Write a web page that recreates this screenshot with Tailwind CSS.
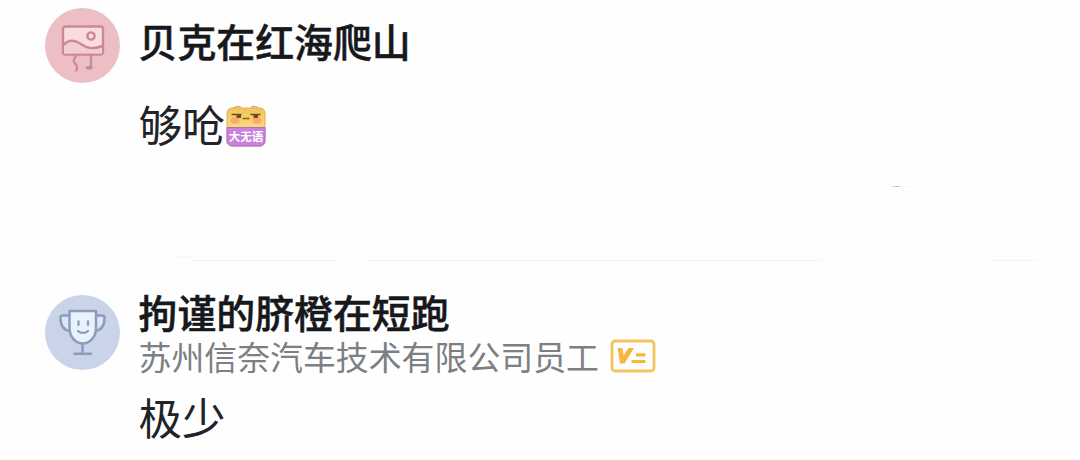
<!DOCTYPE html>
<html lang="zh-CN">
<head>
  <meta charset="UTF-8">
  <meta name="viewport" content="width=device-width, initial-scale=1.0">
  <title>评论</title>
  <!-- Tailwind CSS -->
  <script src="https://cdn.jsdelivr.net/npm/@tailwindcss/browser@4"></script>
</head>
<body class="bg-[#fefefe] h-[460px] overflow-hidden font-['Noto_Sans_CJK_SC',sans-serif]">

  <!-- First comment -->
  <article class="flex h-[255px] pl-[45px] pt-2">
    <svg class="size-[75px] shrink-0" viewBox="0 0 75 75" fill="none" stroke="#cd8993" stroke-width="2.4" stroke-linecap="round" stroke-linejoin="round">
      <circle cx="37.5" cy="37.5" r="37.5" fill="#edbfc5" stroke="none" />
      <rect x="18" y="18.500" width="40" height="28" rx="2.500" fill="#f9dce0" />
      <path d="M19 37c5-5.500 11-5 16-1.500 9 6 14 5.500 22 2.500v7.500H19z" fill="#f3cdd3" stroke="none" />
      <path d="M18.500 37c5-5.500 11-5 16.500-1.500 9 6 14 5.500 22.500 2.500" />
      <circle cx="46" cy="28" r="3.600" />
      <path d="M31 48c-2 3-3.500 5-1 7.500 2.500 2 3 4 1 7M46 48v11.500" stroke-width="2.300" />
      <path d="M42.500 59.700h3.500" stroke-width="3.400" />
    </svg>
    <div class="ml-[18.500px] pt-2 flex flex-col">
      <h2 class="text-[38.900px] leading-[48px] font-medium text-[#17181c] [-webkit-text-stroke:0.5px_#17181c]">贝克在红海爬山</h2>
      <div class="mt-[34px] flex items-center">
        <p class="text-[43.500px] leading-[52px] text-[#222326]">够呛</p>
        <svg class="mt-1 w-10 h-[42px]" viewBox="0 0 40 42">
          <defs>
            <linearGradient id="face" x1="0" y1="0" x2="0" y2="1">
              <stop offset="0" stop-color="#f3c35a" />
              <stop offset=".5" stop-color="#fbd975" />
            </linearGradient>
          </defs>
          <path d="M8 3c1-1.500 5-2 7-.500M25 2.500c2-1.500 6-1 7 .500" stroke="#d3a868" stroke-width="1.500" fill="none" />
          <rect x="1" y="3" width="38" height="38" rx="5" fill="url(#face)" stroke="#e0b055" stroke-width="1" />
          <ellipse cx="9" cy="15.500" rx="4.500" ry="3.500" fill="#f8ab6c" />
          <ellipse cx="31" cy="15.500" rx="4.500" ry="3.500" fill="#f8ab6c" />
          <path d="M5.500 9.500h10M24.500 9.500h10" stroke="#6b4923" stroke-width="1.600" />
          <path d="M10.500 11.500h4.500M27.500 11.500h4.500" stroke="#5b3b1c" stroke-width="2.600" />
          <path d="M16.500 13.500h7" stroke="#94602b" stroke-width="1.600" />
          <path d="M1 22.500h38v13.500a5 5 0 0 1-5 5H6a5 5 0 0 1-5-5z" fill="#c882de" stroke="#b06fc6" />
          <text x="20" y="36.300" text-anchor="middle" font-size="11.500" font-weight="700" fill="#fff">大无语</text>
        </svg>
      </div>
    </div>
    <!-- Faint dash on the right -->
    <div class="mt-[178px] ml-[480px] w-[18px] h-px flex">
      <span class="w-2 h-px bg-linear-to-r from-[#eeeeee] to-[#a8a8a8]"></span>
      <span class="w-2.5 h-px bg-[#f3f3f3]"></span>
    </div>
  </article>

  <!-- Broken divider -->
  <div class="h-[6px] flex pl-[176px]">
    <span class="mt-px w-4 h-0.5 bg-[#f9f9f9]"></span>
    <span class="mt-[5px] w-36 h-px bg-[#f3f3f3]"></span>
    <span class="mt-[5px] ml-8 w-[454px] h-px bg-[#f3f3f3]"></span>
    <span class="mt-[5px] ml-[170px] w-[45px] h-px bg-[#f5f5f5]"></span>
  </div>

  <!-- Second comment -->
  <article class="flex pl-[45px] pt-[26px]">
    <svg class="mt-2 size-[75px] shrink-0" viewBox="0 0 75 75" fill="none" stroke="#8c9dba" stroke-width="2.500" stroke-linecap="round" stroke-linejoin="round">
      <circle cx="37.500" cy="37.500" r="37.500" fill="#c9d4e9" stroke="none" />
      <path d="M24 20.500h-6.500c-1.500 0-2 1-2 2.500 0 8 3 12.500 10 13M51 20.500h6.500c1.500 0 2 1 2 2.500 0 8-3 12.500-10 13" fill="#dce8f8" />
      <path d="M24.500 16h26.500v17c0 9-6 15.500-13.200 15.500S24.500 42 24.500 33z" fill="#e7f2fd" />
      <path d="M37.500 49v9.500M29.500 58.800h16.500" />
      <path d="M33.500 26.500v3.500M43 26.500v3.500M33 36c2.500 2.500 7.500 2.500 10 0" stroke-width="2.300" />
    </svg>
    <div class="ml-[18.500px] flex flex-col">
      <h2 class="text-[38.900px] leading-[48px] font-medium text-[#17181c] [-webkit-text-stroke:0.5px_#17181c]">拘谨的脐橙在短跑</h2>
      <div class="mt-px flex items-center">
        <span class="text-[32.900px] leading-[40px] text-[#7c7f83]">苏州信奈汽车技术有限公司员工</span>
        <svg class="ml-[11.500px] w-[46px] h-[34px]" viewBox="0 0 46 34" fill="none" stroke="#f7b640">
          <rect x="2" y="2" width="42" height="30" rx="3" stroke-width="2.800" stroke="#f6c45e" />
          <path d="M7.500 9h5l1.200 7.500L18.500 9h5.500L14.500 24.500h-4.500z" fill="#f7b640" stroke="none" />
          <path d="M26 15.800h9.500M21.500 22.500h14" stroke-width="3.200" />
        </svg>
      </div>
      <p class="mt-[15px] text-[43.500px] leading-[52px] text-[#222326]">极少</p>
    </div>
  </article>

</body>
</html>
